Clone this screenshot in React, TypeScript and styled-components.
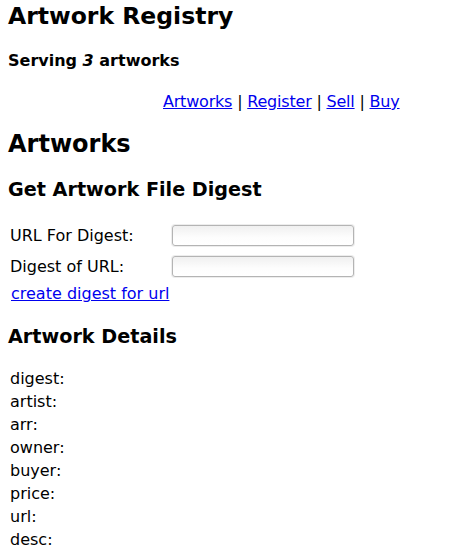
import React from "react";
import styled, { createGlobalStyle } from "styled-components";

const Global = createGlobalStyle`
  html, body { margin: 0; padding: 0; background: #fff; }
  body { font-family: "DejaVu Sans", sans-serif; font-size: 16px; color: #000; }
`;

const Page = styled.div`
  padding: 0 8px;
`;

const Title = styled.h1`
  font-size: 23.5px;
  font-weight: bold;
  margin: 2px 0 0;
  line-height: 28px;
`;

const Serving = styled.h4`
  font-size: 16px;
  font-weight: bold;
  margin: 21px 0 0;
  line-height: 19px;
`;

const Nav = styled.div`
  margin-top: 22px;
  padding-left: 155px;
  line-height: 19px;
  letter-spacing: -0.2px;
`;

const Link = styled.a`
  color: #0000ee;
  text-decoration: underline;
`;

const SectionTitle = styled.h2`
  font-size: 24px;
  font-weight: bold;
  margin: 19px 0 0;
  line-height: 28px;
`;

const SubTitle = styled.h3<{ $top: number }>`
  font-size: 19.2px;
  font-weight: bold;
  margin: ${(p) => p.$top}px 0 0;
  line-height: 22px;
`;

const Form = styled.table`
  margin-top: 18px;
  border-spacing: 2px;
  margin-left: -1px;
`;

const Cell = styled.td`
  padding: 4px 1px;
  vertical-align: middle;
  line-height: 19px;
`;

const LabelCell = styled(Cell)`
  width: 158px;
`;

const Input = styled.input`
  box-sizing: border-box;
  display: block;
  width: 182px;
  height: 21px;
  border: 1px solid #b4b4b4;
  border-radius: 3px;
  background: linear-gradient(#f0f0f0, #fdfdfd 60%, #ffffff);
  box-shadow: 0 0 0 1px #ededed;
  padding: 0 4px;
  font: inherit;
  font-size: 13px;
`;

const FormLink = styled.div`
  margin: 1px 0 0 3px;
  line-height: 19px;
`;

const Details = styled.table`
  margin-top: 18px;
  border-spacing: 2px;
  margin-left: -1px;
`;

const DetailCell = styled.td`
  padding: 1px;
  line-height: 19px;
`;

const fields = ["digest", "artist", "arr", "owner", "buyer", "price", "url", "desc"];

export default function App() {
  return (
    <>
      <Global />
      <Page>
        <Title>Artwork Registry</Title>
        <Serving>
          Serving <em>3</em> artworks
        </Serving>
        <Nav>
          <Link href="#">Artworks</Link> | <Link href="#">Register</Link> |{" "}
          <Link href="#">Sell</Link> | <Link href="#">Buy</Link>
        </Nav>
        <SectionTitle>Artworks</SectionTitle>
        <SubTitle $top={21}>Get Artwork File Digest</SubTitle>
        <Form>
          <tbody>
            <tr>
              <LabelCell>URL For Digest:</LabelCell>
              <Cell>
                <Input type="text" />
              </Cell>
            </tr>
            <tr>
              <LabelCell>Digest of URL:</LabelCell>
              <Cell>
                <Input type="text" />
              </Cell>
            </tr>
          </tbody>
        </Form>
        <FormLink>
          <Link href="#">create digest for url</Link>
        </FormLink>
        <SubTitle $top={23}>Artwork Details</SubTitle>
        <Details>
          <tbody>
            {fields.map((f) => (
              <tr key={f}>
                <DetailCell>{f}:</DetailCell>
                <DetailCell />
              </tr>
            ))}
          </tbody>
        </Details>
      </Page>
    </>
  );
}
